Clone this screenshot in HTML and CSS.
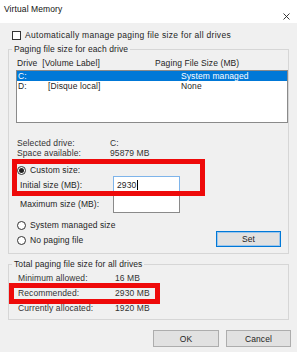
FILE: index.html
```html
<!DOCTYPE html>
<html lang="en">
<head>
    <meta charset="UTF-8">
    <meta name="viewport" content="width=device-width, initial-scale=1.0">
    <title>Virtual Memory</title>
    <link rel="stylesheet" href="styles.css">
</head>
<body>
    <div class="window">
        <div class="titlebar">
            <span class="title">Virtual Memory</span>
            <svg class="close" width="7" height="7" viewBox="0 0 7 7">
                <path d="M0.5 0.5L6.5 6.5M6.5 0.5L0.5 6.5" stroke="#222" stroke-width="0.9" fill="none"/>
            </svg>
        </div>

        <div class="dialog">
            <div class="check-row"><span class="checkbox"></span><span class="check-label">Automatically manage paging file size for all drives</span></div>

            <fieldset class="group group-drives">
                <legend>Paging file size for each drive</legend>
                <div class="list-head">
                    <span>Drive&nbsp;&nbsp;[Volume Label]</span>
                    <span>Paging File Size (MB)</span>
                </div>
                <div class="drive-list">
                    <div class="drive-row selected"><span>C:</span><span></span><span>System managed</span></div>
                    <div class="drive-row"><span>D:</span><span>[Disque local]</span><span>None</span></div>
                </div>

                <div class="info">
                    <span>Selected drive:</span><span>C:</span>
                    <span>Space available:</span><span>95879 MB</span>
                </div>

                <div class="radio-row custom"><span class="radio checked"></span>Custom size:</div>
                <div class="size-grid">
                    <span>Initial size (MB):</span>
                    <div class="textbox focused">2930<span class="caret"></span></div>
                    <span>Maximum size (MB):</span>
                    <div class="textbox"></div>
                </div>

                <div class="bottom-row">
                    <div class="radios">
                        <div class="radio-row"><span class="radio"></span>System managed size</div>
                        <div class="radio-row"><span class="radio"></span>No paging file</div>
                    </div>
                    <button class="btn btn-set">Set</button>
                </div>
            </fieldset>

            <fieldset class="group group-total">
                <legend>Total paging file size for all drives</legend>
                <div class="totals">
                    <span>Minimum allowed:</span><span>16 MB</span>
                    <span>Recommended:</span><span>2930 MB</span>
                    <span>Currently allocated:</span><span>1920 MB</span>
                </div>
            </fieldset>

            <div class="actions">
                <button class="btn btn-ok">OK</button>
                <button class="btn btn-cancel">Cancel</button>
            </div>
        </div>

        <!-- red annotation boxes drawn over the dialog -->
        <div class="mark mark-custom"></div>
        <div class="mark mark-recommended"></div>
    </div>
</body>
</html>
```

FILE: styles.css
```css
body {
    margin: 0;
    background-color: #f0f0f0;
    font-family: "Liberation Sans", Arial, sans-serif;
    font-size: 8.5px;
    letter-spacing: 0.1px;
    color: #1e1e1e;
}

.window {
    position: relative;
    width: 297px;
    height: 352px;
    overflow: hidden;
    background-color: #f0f0f0;
}

.titlebar {
    height: 23px;
    box-sizing: border-box;
    padding: 4px 7px 0 4px;
    display: flex;
    justify-content: space-between;
    align-items: flex-start;
    background-color: #fff;
}

.title {
    line-height: 10px;
    color: #111;
}

.close {
    margin-top: 9px;
}

.dialog {
    padding-top: 7px;
}

.check-row {
    display: flex;
    align-items: center;
    height: 10px;
    line-height: 10px;
    margin-left: 12px;
}

.check-label {
    letter-spacing: 0.3px;
}

.checkbox {
    width: 9px;
    height: 9px;
    box-sizing: border-box;
    border: 1px solid #333;
    background-color: #fff;
    margin-right: 4px;
}

.group {
    margin: 0 8px;
    padding: 4px 0 6px 7px;
    border: 1px solid #d6d6d6;
    min-inline-size: 0;
}

.group legend {
    padding: 0 2px;
    margin-left: -4px;
    line-height: 10px;
}

.group-drives {
    margin-top: 4px;
}

.list-head {
    display: grid;
    grid-template-columns: 138px 1fr;
    line-height: 10px;
    padding-left: 1px;
}

.drive-list {
    margin-top: 2px;
    height: 53px;
    box-sizing: border-box;
    border: 1px solid #8a8a8a;
    background-color: #fff;
}

.drive-row {
    display: grid;
    grid-template-columns: 30px 133px 1fr;
    height: 10px;
    line-height: 10px;
    padding-left: 1px;
}

.drive-row.selected {
    background-color: #0078d7;
    color: #fff;
}

.info {
    margin-top: 15px;
    margin-left: 1px;
    display: grid;
    grid-template-columns: 93px 1fr;
    line-height: 10px;
    color: #333;
}

.radio-row {
    display: flex;
    align-items: center;
    height: 10px;
    line-height: 10px;
    margin-left: 1px;
}

.custom {
    margin-top: 7px;
}

.radio {
    width: 9px;
    height: 9px;
    box-sizing: border-box;
    border: 1px solid #333;
    border-radius: 50%;
    background-color: #fff;
    margin-right: 4px;
    display: flex;
    align-items: center;
    justify-content: center;
}

.radio.checked::after {
    content: "";
    width: 5px;
    height: 5px;
    border-radius: 50%;
    background-color: #222;
}

.size-grid {
    margin-top: 1px;
    padding-left: 4px;
    display: grid;
    grid-template-columns: 93px 67px;
    grid-auto-rows: 18px;
    row-gap: 1px;
    align-items: center;
}

.textbox {
    height: 18px;
    box-sizing: border-box;
    border: 1px solid #8a8a8a;
    background-color: #fff;
    padding-left: 3px;
    line-height: 16px;
    display: flex;
    align-items: center;
}

.textbox.focused {
    border-color: #7eb4ea;
}

.caret {
    width: 1px;
    height: 10px;
    background-color: #000;
    margin-left: 1px;
}

.bottom-row {
    margin-top: 7px;
    display: flex;
    justify-content: space-between;
    align-items: flex-end;
    padding-right: 7px;
}

.radios {
    display: flex;
    flex-direction: column;
    gap: 5px;
    margin-bottom: 2px;
}

.btn {
    font-family: inherit;
    font-size: 8.5px;
    letter-spacing: 0.1px;
    color: #1e1e1e;
    background-color: #e1e1e1;
    border: 1px solid #adadad;
    padding: 0;
    line-height: 14px;
}

.btn-set {
    width: 65px;
    height: 16px;
    border-color: #0078d7;
    box-shadow: inset 0 0 0 1px #9cc6ec;
}

.group-total {
    margin-top: 5px;
}

.totals {
    margin-left: 2px;
    display: grid;
    grid-template-columns: 97px 1fr;
    grid-auto-rows: 10px;
    row-gap: 5px;
    line-height: 10px;
    color: #333;
}

.actions {
    margin-top: 10px;
    padding-right: 6px;
    display: flex;
    justify-content: flex-end;
    gap: 7px;
}

.btn-ok {
    width: 66px;
    height: 17px;
}

.btn-cancel {
    width: 65px;
    height: 17px;
}

.mark {
    position: absolute;
    border: 5px solid #ee0a0a;
}

.mark-custom {
    left: 12px;
    top: 159px;
    width: 183px;
    height: 27px;
}

.mark-recommended {
    left: 9px;
    top: 283px;
    width: 141px;
    height: 11px;
}
```
